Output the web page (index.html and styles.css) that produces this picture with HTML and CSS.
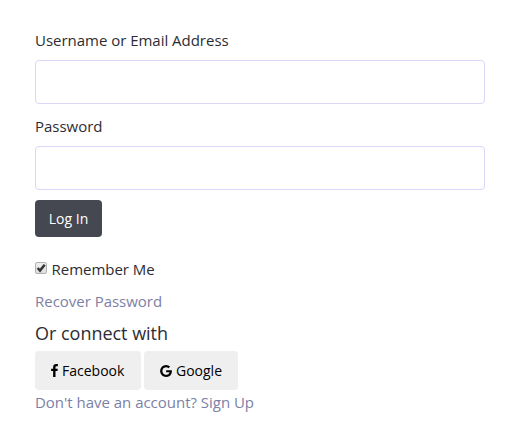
FILE: index.html
```html
<!DOCTYPE html>
<html lang="en">
<head>
<meta charset="utf-8">
<title>Log In</title>
<link rel="stylesheet" href="styles.css">
</head>
<body>
<form class="login">
  <label class="label" for="user">Username or Email Address</label>
  <input class="field" id="user" type="text">
  <label class="label label-next" for="pass">Password</label>
  <input class="field" id="pass" type="password">
  <button class="submit" type="button">Log In</button>
  <label class="remember"><input class="check" type="checkbox" checked><svg class="tick" viewBox="0 0 12 12"><path d="M2.6 6 5 8.5 9.7 2.7"/></svg><span>Remember Me</span></label>
  <a class="link recover">Recover Password</a>
  <h2 class="heading">Or connect with</h2>
  <div class="social">
    <button class="provider facebook" type="button"><svg class="icon-f" viewBox="95 128 864 1664"><path d="M959 140v264H802q-86 0-116 36t-30 108v189h293l-39 296H656v759H350v-759H95V737h255V519q0-186 104-288.500T731 128q147 0 228 12z"/></svg><span>Facebook</span></button>
    <button class="provider google" type="button"><svg class="icon-g" viewBox="0 92 1505 1536"><path d="M768 750h725q12 67 12 128 0 217-91 387.500T1154.500 1532 768 1628q-157 0-299-60.500T223 1404 60.500 1159 0 860t60.500-299T223 316 469 152.500 768 92q300 0 515 201l-209 201Q951 375 768 375q-129 0-238.500 65T356 616.500 292 860t64 243.500T529.500 1280 768 1345q87 0 160-24t120-60 82-82 51.500-87 22.500-78H768V750z"/></svg><span>Google</span></button>
  </div>
  <a class="link signup">Don't have an account? Sign Up</a>
</form>
</body>
</html>
```
FILE: styles.css
```css
body {
  margin: 0;
  background: #fff;
  color: #2c2d33;
  font: 15px/22px "Open Sans", sans-serif;
}
.login {
  display: flex;
  flex-direction: column;
  align-items: flex-start;
  width: 450px;
  padding: 29px 35px 0;
}
.label { margin-bottom: 9px; }
.label-next { margin-top: 11px; }
.label, .link, .heading, .remember { letter-spacing: -0.02px; }
.field {
  box-sizing: border-box;
  width: 100%;
  height: 44px;
  border: 1px solid #dad7f8;
  border-radius: 4px;
  background: #fff;
  padding: 0 12px;
  font: inherit;
  outline: none;
}
.submit {
  width: 67px;
  height: 37px;
  margin-top: 10px;
  padding: 0;
  border: 0;
  border-radius: 4px;
  background: #454751;
  color: #fff;
  font: 14px/20px "Open Sans", sans-serif;
}
.remember {
  display: grid;
  grid-template-columns: 12px auto;
  column-gap: 4.5px;
  align-items: center;
  height: 22px;
  margin-top: 21px;
}
.check, .tick {
  grid-area: 1 / 1;
  box-sizing: border-box;
  width: 12px;
  height: 12px;
  margin: 0 0 2px;
}
.check {
  appearance: none;
  border: 1px solid #b1b1b1;
  border-radius: 2px;
  background: linear-gradient(#eee, #dedede);
}
.tick {
  fill: none;
  stroke: #333;
  stroke-width: 2.5;
  pointer-events: none;
}
.link { color: #7c7fa5; }
.recover { margin-top: 10px; }
.heading {
  margin: 9px 0 6px;
  font-size: 18px;
  font-weight: 400;
  line-height: 24px;
}
.social { display: flex; gap: 3px; }
.provider {
  display: flex;
  align-items: center;
  box-sizing: border-box;
  height: 39px;
  padding: 0 0 0 16px;
  border: 0;
  border-radius: 4px;
  background: #efefef;
  color: #000;
  font: 14px/20px "Open Sans", sans-serif;
}
.facebook { width: 106px; gap: 4px; }
.google { width: 94px; gap: 4px; }
.icon-f { width: 7px; height: 13px; }
.icon-g { width: 12px; height: 12px; }
.signup { margin-top: 1px; }
```
